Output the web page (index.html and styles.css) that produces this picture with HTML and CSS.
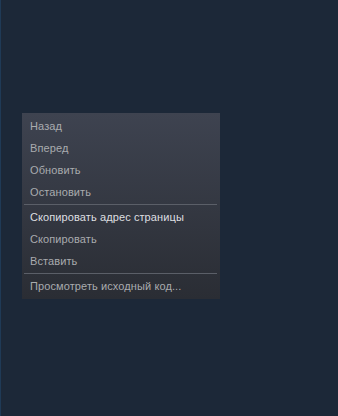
FILE: index.html
```html
<!DOCTYPE html>
<html lang="ru">
<head>
<meta charset="utf-8">
<link rel="stylesheet" href="styles.css">
</head>
<body>
<div class="page">
  <div class="menu">
    <div class="item">Назад</div>
    <div class="item">Вперед</div>
    <div class="item">Обновить</div>
    <div class="item">Остановить</div>
    <div class="sep"></div>
    <div class="item active">Скопировать адрес страницы</div>
    <div class="item">Скопировать</div>
    <div class="item">Вставить</div>
    <div class="sep"></div>
    <div class="item">Просмотреть исходный код...</div>
  </div>
</div>
</body>
</html>
```
FILE: styles.css
```css
html, body {
  margin: 0;
  padding: 0;
  height: 100%;
  background: #1c2838;
}
.page {
  height: 416px;
  box-sizing: border-box;
  border-left: 1px solid #1f3a56;
  padding: 113px 0 0 21px;
}
.menu {
  width: 198px;
  box-sizing: border-box;
  padding: 2px 0;
  background: linear-gradient(to bottom, #3e4350 0%, #2a2d34 100%);
  font-family: "Liberation Sans", Arial, sans-serif;
  font-size: 11px;
  letter-spacing: 0.1px;
  color: #a9abae;
}
.item {
  height: 22px;
  line-height: 22px;
  padding-left: 8px;
  white-space: nowrap;
}
.item.active {
  color: #dedfe0;
}
.sep {
  height: 1px;
  margin: 1px 3px 1px 2px;
  background: #5b5f68;
}
```
